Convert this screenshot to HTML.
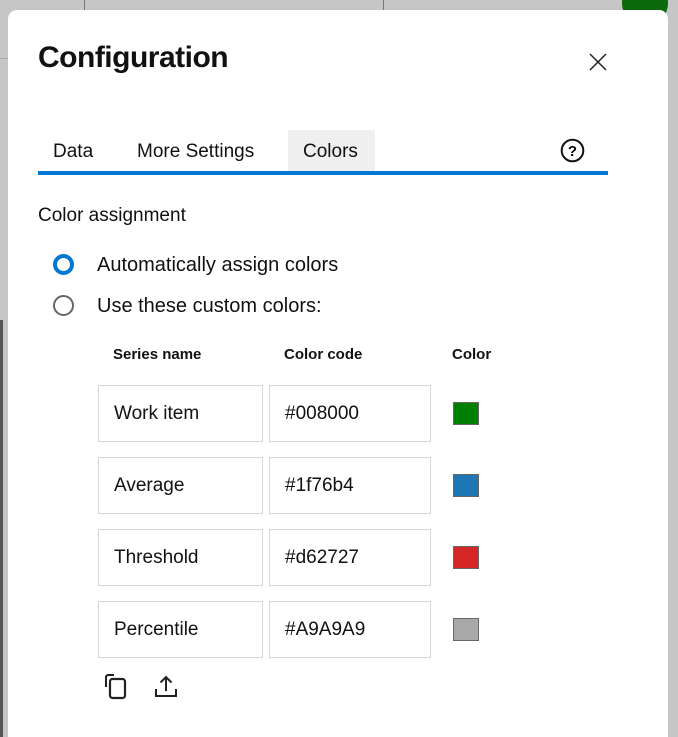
<!DOCTYPE html>
<html style="width:678px;height:737px;overflow:hidden"><head><style>
*{margin:0;padding:0;box-sizing:border-box}
body{width:678px;height:737px;background:#c6c6c6;position:relative;overflow:hidden;font-family:"Liberation Sans",sans-serif;color:#111}
.a{position:absolute}
.dlg{left:8px;top:10px;width:660px;height:727px;background:#fff;border-radius:9px 9px 0 0}
.inp{position:absolute;height:57px;border:1px solid #d6d6d6;background:#fff;font-size:19px;line-height:55px;padding-left:15px}
.sw{position:absolute;width:26px;height:23px;border:1px solid #666}
.hd{position:absolute;top:346px;font-size:15px;font-weight:bold}
</style></head><body>
<div class="a" style="left:84px;top:0;width:1px;height:10px;background:#777"></div>
<div class="a" style="left:383px;top:0;width:1px;height:10px;background:#777"></div>
<div class="a" style="left:0;top:58px;width:8px;height:1px;background:#aaa"></div>
<div class="a" style="left:0;top:320px;width:3px;height:417px;background:#555"></div>
<div class="a" style="left:622px;top:-20px;width:46px;height:46px;border-radius:50%;background:#0b6a0b"></div>
<div class="a dlg"></div>
<div class="a" style="left:38px;top:41px;font-size:30px;font-weight:bold;letter-spacing:-0.5px">Configuration</div>
<svg class="a" style="left:589px;top:53px" width="18" height="18" viewBox="0 0 18 18"><path d="M1 1L17 17M17 1L1 17" stroke="#222" stroke-width="1.5"/></svg>
<div class="a" style="left:288px;top:130px;width:87px;height:41px;background:#efefef"></div>
<div class="a" style="left:53px;top:141px;font-size:19px">Data</div>
<div class="a" style="left:137px;top:141px;font-size:19px">More Settings</div>
<div class="a" style="left:303px;top:141px;font-size:19px">Colors</div>
<svg class="a" style="left:560px;top:138px" width="25" height="25" viewBox="0 0 25 25"><circle cx="12.5" cy="12.5" r="10.8" fill="none" stroke="#111" stroke-width="2"/><text x="12.5" y="18" font-size="15" font-weight="bold" text-anchor="middle" font-family="Liberation Sans">?</text></svg>
<div class="a" style="left:38px;top:171px;width:570px;height:4px;background:#0078d4"></div>
<div class="a" style="left:38px;top:205px;font-size:19px">Color assignment</div>
<div class="a" style="left:53px;top:254px;width:21px;height:21px;border-radius:50%;border:4px solid #0078d4"></div>
<div class="a" style="left:97px;top:254px;font-size:20px">Automatically assign colors</div>
<div class="a" style="left:53px;top:295px;width:21px;height:21px;border-radius:50%;border:2.5px solid #666"></div>
<div class="a" style="left:97px;top:295px;font-size:20px">Use these custom colors:</div>
<div class="hd" style="left:113px">Series name</div>
<div class="hd" style="left:284px">Color code</div>
<div class="hd" style="left:452px">Color</div>

<div class="inp" style="left:98px;top:385px;width:165px">Work item</div>
<div class="inp" style="left:269px;top:385px;width:162px">#008000</div>
<div class="sw" style="left:453px;top:402px;background:#008000"></div>
<div class="inp" style="left:98px;top:457px;width:165px">Average</div>
<div class="inp" style="left:269px;top:457px;width:162px">#1f76b4</div>
<div class="sw" style="left:453px;top:474px;background:#1f76b4"></div>
<div class="inp" style="left:98px;top:529px;width:165px">Threshold</div>
<div class="inp" style="left:269px;top:529px;width:162px">#d62727</div>
<div class="sw" style="left:453px;top:546px;background:#d62727"></div>
<div class="inp" style="left:98px;top:601px;width:165px">Percentile</div>
<div class="inp" style="left:269px;top:601px;width:162px">#A9A9A9</div>
<div class="sw" style="left:453px;top:618px;background:#a9a9a9"></div>

<svg class="a" style="left:103px;top:673px" width="28" height="28" viewBox="0 0 28 28"><path d="M3 14V4.5Q3 2 5.5 2H11" fill="none" stroke="#222" stroke-width="2"/><rect x="7" y="6" width="15" height="19" rx="2.5" fill="none" stroke="#222" stroke-width="2.2"/></svg>
<svg class="a" style="left:153px;top:673px" width="28" height="28" viewBox="0 0 28 28"><path d="M13 4V18M7.5 9.5L13 4L18.5 9.5M3 16V23H23V16" fill="none" stroke="#222" stroke-width="2"/></svg>
</body></html>
